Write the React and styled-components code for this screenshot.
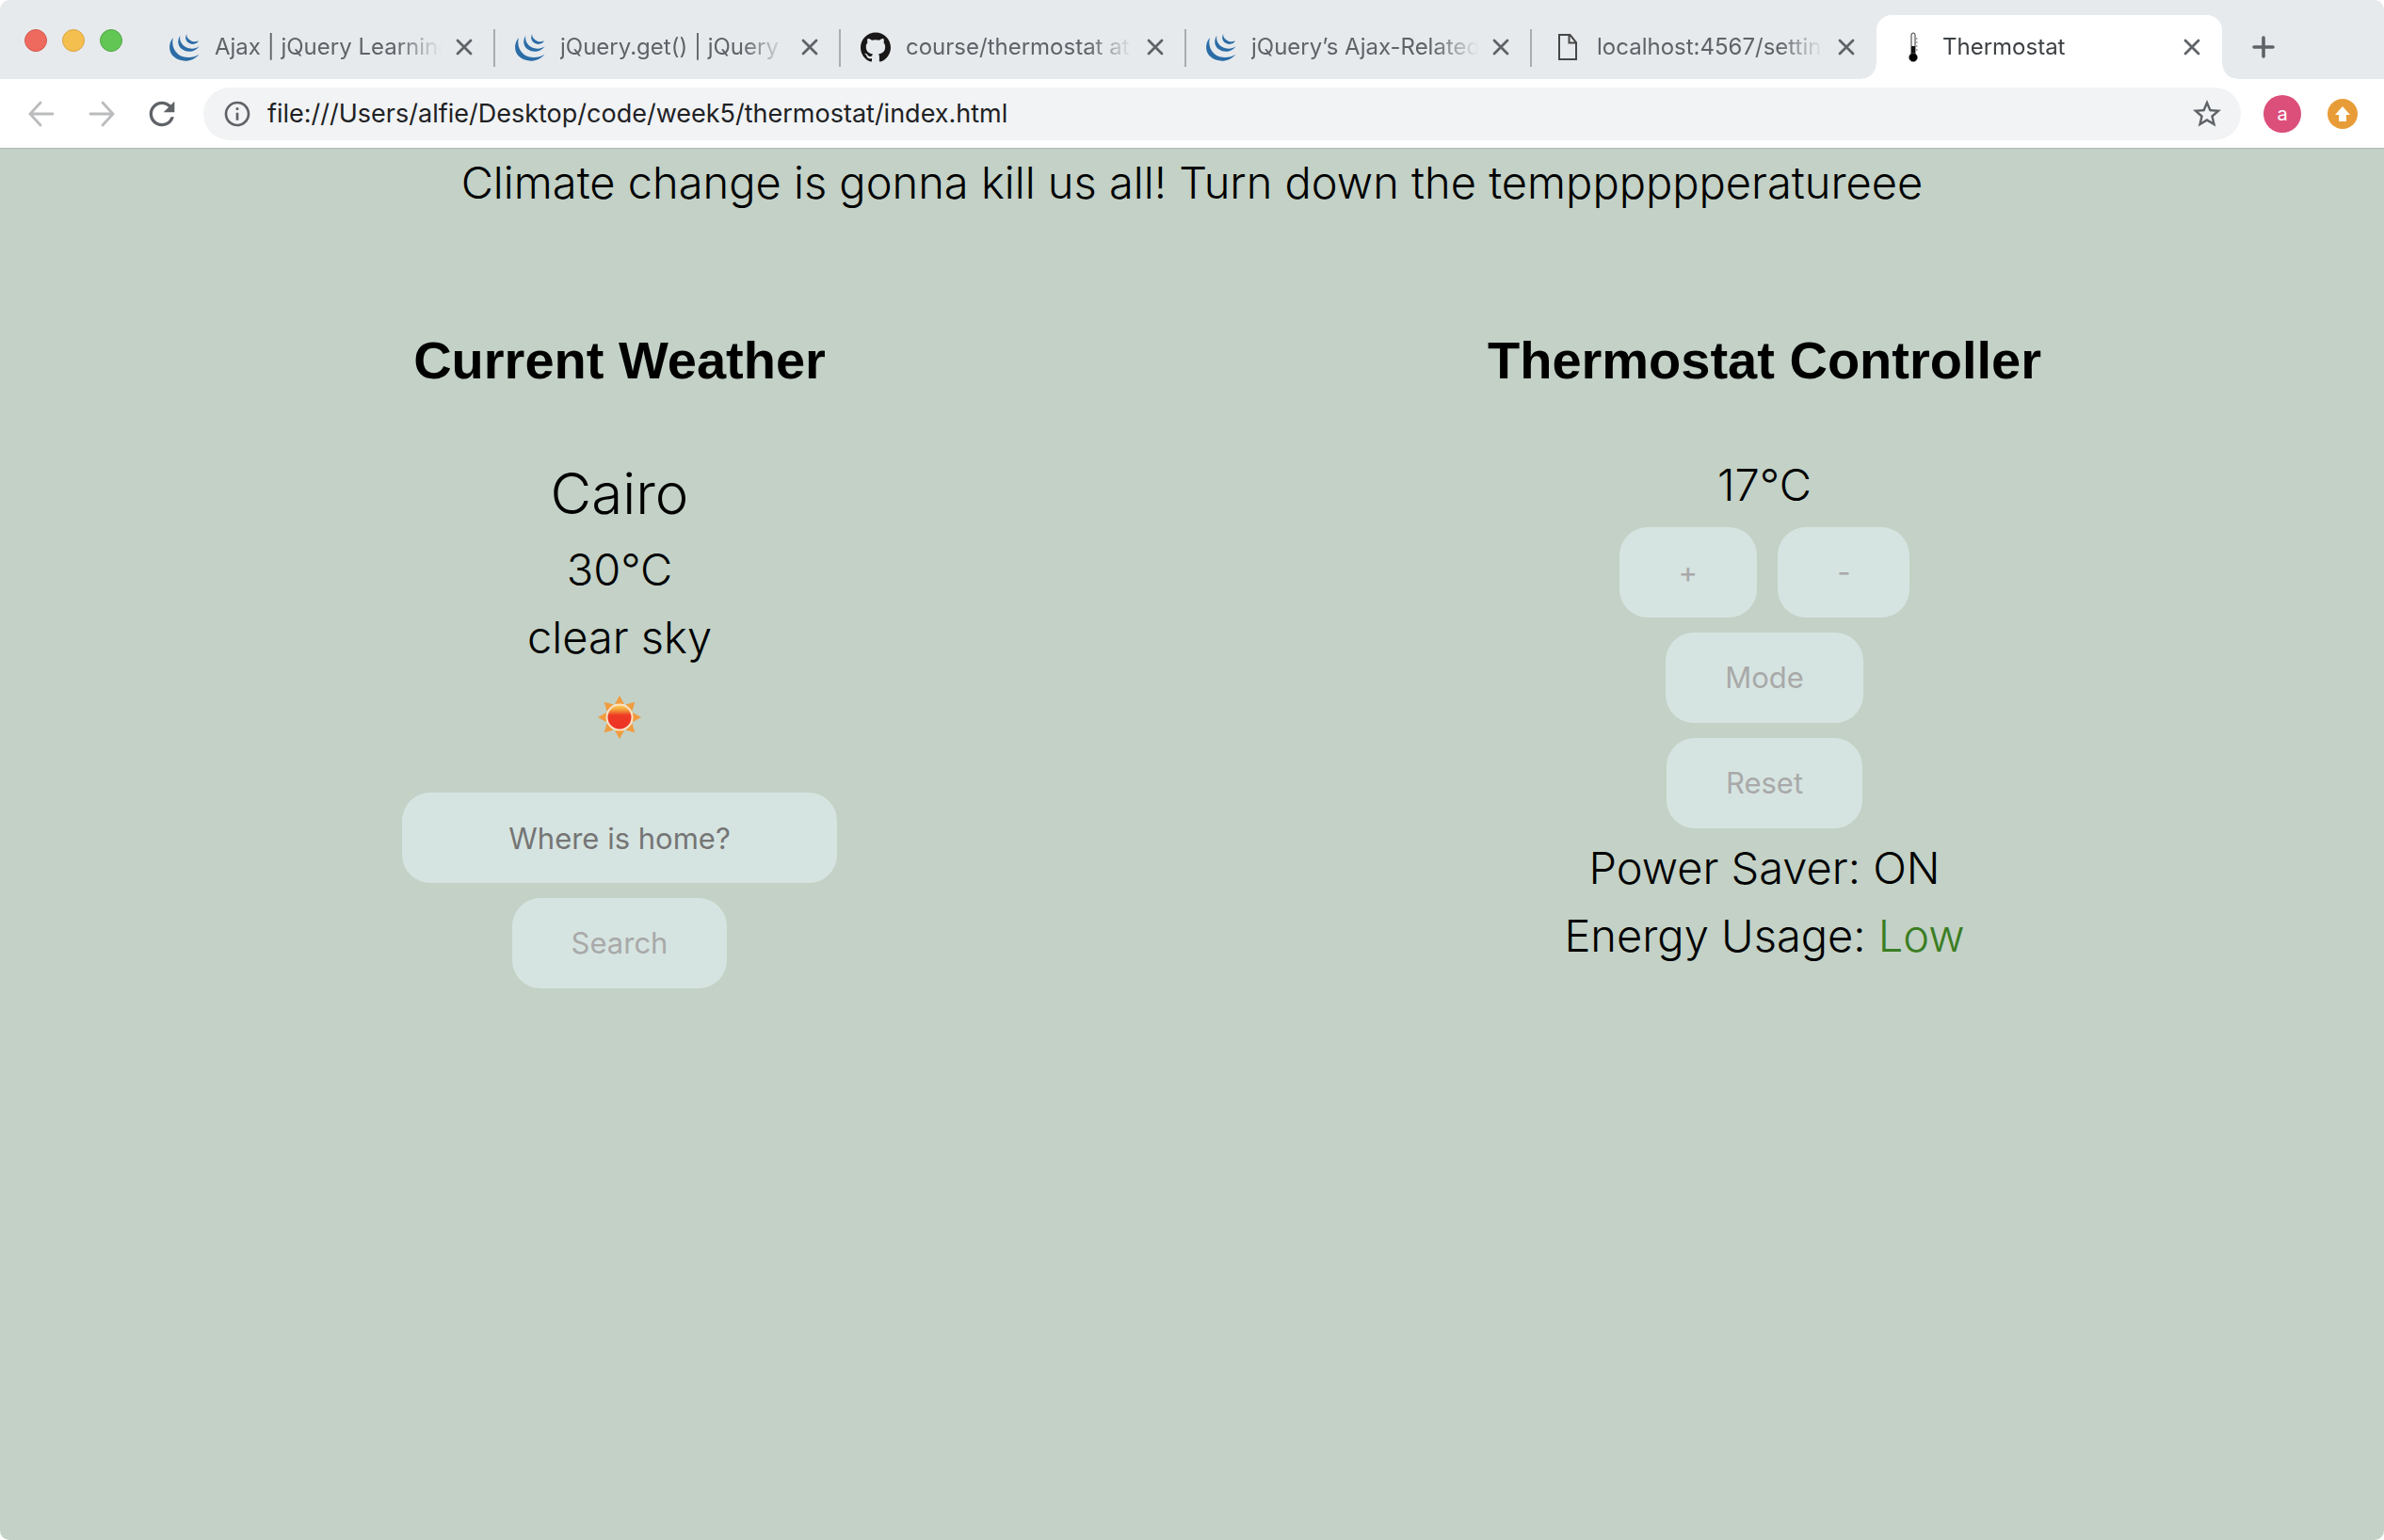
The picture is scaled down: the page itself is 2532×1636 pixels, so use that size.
import React from "react";
import styled, { createGlobalStyle, css } from "styled-components";
import { MdRefresh, MdInfoOutline, MdStarBorder } from "react-icons/md";
import { SiGithub } from "react-icons/si";

const ui = `Inter, "Noto Sans", sans-serif`;
const display = `"Liberation Sans", Arial, sans-serif`;

const colors = {
  strip: "#e6eaed",
  chromeIcon: "#5f6368",
  chromeIconOff: "#babcbe",
  page: "#c3d1c6",
  control: "#d6e4e1",
  controlText: "#a9a9a9",
  placeholder: "#757575",
  low: "#3a7d22",
};

const GlobalStyle = createGlobalStyle`
  *, *::before, *::after { box-sizing: border-box; }
  body { margin: 0; background: #fff; font-family: ${ui}; }
  h1, h2, p { margin: 0; }
  button, input { font-family: inherit; border: 0; padding: 0; background: none; outline: 0; }
  button { cursor: pointer; }
`;

const Window = styled.div`
  min-height: 100vh;
  display: flex;
  flex-direction: column;
  border-radius: 10px;
  overflow: hidden;
`;

/* Tab strip */

const TabStrip = styled.header`
  display: flex;
  align-items: flex-end;
  height: 84px;
  padding-left: 26px;
  background: ${colors.strip};
`;

const WindowButtons = styled.div`
  display: flex;
  align-items: center;
  gap: 16px;
  height: 82px;
  margin-right: 28px;
`;

const WindowButton = styled.button`
  width: 24px;
  height: 24px;
  border-radius: 50%;
  background: ${(p) => p.$fill};
  border: 1px solid ${(p) => p.$edge};
`;

const Tabs = styled.nav`
  display: flex;
  min-width: 0;
`;

const activeTab = css`
  background: #fff;
  border-radius: 16px 16px 0 0;

  &::before,
  &::after {
    content: "";
    position: absolute;
    bottom: 0;
    width: 16px;
    height: 16px;
  }
  &::before {
    left: -16px;
    background: radial-gradient(circle at 0 0, ${colors.strip} 15px, #fff 16px);
  }
  &::after {
    right: -16px;
    background: radial-gradient(circle at 100% 0, ${colors.strip} 15px, #fff 16px);
  }
`;

const dividedTab = css`
  &::after {
    content: "";
    position: absolute;
    right: -1px;
    top: 15px;
    width: 2px;
    height: 40px;
    background: #a9adb0;
  }
`;

const TabBox = styled.div`
  position: relative;
  display: flex;
  align-items: center;
  flex: 0 1 367px;
  width: 367px;
  min-width: 0;
  height: 68px;
  padding: 0 20px 0 22px;
  ${(p) => p.$active && activeTab}
  ${(p) => p.$divided && dividedTab}
`;

const TabLink = styled.a`
  display: flex;
  align-items: center;
  gap: 16px;
  flex: 1;
  min-width: 0;
  color: ${(p) => (p.$active ? "#3c4043" : colors.chromeIcon)};
  text-decoration: none;
`;

const TabTitle = styled.span`
  flex: 1;
  min-width: 0;
  overflow: hidden;
  white-space: nowrap;
  font-size: 24px;
  line-height: 32px;
  mask-image: linear-gradient(to right, #000 calc(100% - 48px), transparent);
`;

const IconButton = styled.button`
  display: grid;
  place-items: center;
  flex: none;
  width: ${(p) => p.$size || 32}px;
  height: ${(p) => p.$size || 32}px;
  color: ${(p) => (p.$off ? colors.chromeIconOff : colors.chromeIcon)};
`;

const CloseButton = styled(IconButton)`
  width: 24px;
  margin-left: 12px;
`;

const NewTabButton = styled(IconButton)`
  align-self: center;
  margin: 16px 0 0 28px;
`;

/* Toolbar */

const Toolbar = styled.div`
  display: flex;
  align-items: center;
  height: 74px;
  padding: 0 28px;
  background: #fff;
  border-bottom: 1px solid #b4b8b6;
`;

const NavButtons = styled.div`
  display: flex;
  align-items: center;
  gap: 28px;
  margin-right: 24px;
`;

const NavPair = styled.div`
  display: flex;
  gap: 32px;
`;

const AddressBar = styled.div`
  display: flex;
  align-items: center;
  gap: 16px;
  flex: 1;
  height: 56px;
  padding: 0 18px 0 20px;
  border-radius: 28px;
  background: #f1f3f4;
`;

const AddressInput = styled.input`
  flex: 1;
  min-width: 0;
  font-size: 27px;
  line-height: 36px;
  color: #202124;
`;

const Profile = styled.button`
  width: 40px;
  height: 40px;
  margin: 0 28px 0 24px;
  border-radius: 50%;
  background: #dc4f7b;
  color: #fff;
  font-size: 20px;
  line-height: 36px;
`;

const UpdateButton = styled(IconButton)`
  border-radius: 50%;
  background: #e89c37;
`;

/* Page */

const Page = styled.main`
  flex: 1;
  padding: 0 50px 64px;
  background: ${colors.page};
  color: #000;
  text-align: center;
`;

const Line = styled.p`
  font-size: 47px;
  line-height: 72px;
  font-weight: 300;
`;

const Columns = styled.div`
  display: grid;
  grid-template-columns: 1fr 1fr;
  margin-top: 111px;
`;

const Column = styled.section`
  display: flex;
  flex-direction: column;
  align-items: center;
`;

const Heading = styled.h1`
  margin-bottom: 54px;
  font-family: ${display};
  font-size: 56px;
  line-height: 84px;
  font-weight: 700;
`;

const City = styled.h2`
  font-size: 60px;
  line-height: 90px;
  font-weight: 300;
`;

const WeatherIcon = styled.div`
  display: grid;
  place-items: center;
  height: 98px;
`;

const SearchForm = styled.form`
  display: flex;
  flex-direction: column;
  align-items: center;
  gap: 16px;
  margin-top: 31px;
`;

const control = css`
  height: 96px;
  border-radius: 30px;
  background: ${colors.control};
  font-size: 31px;
  line-height: 36px;
`;

const CityInput = styled.input`
  ${control}
  width: 462px;
  text-align: center;
  &::placeholder {
    color: ${colors.placeholder};
    opacity: 1;
  }
`;

const Button = styled.button`
  ${control}
  padding: 0 63px;
  color: ${colors.controlText};
`;

const Controls = styled.div`
  display: flex;
  flex-direction: column;
  align-items: center;
  gap: 16px;
  padding: 9px 0 6px;
`;

const ButtonRow = styled.div`
  display: flex;
  gap: 22px;
`;

const Usage = styled.span`
  color: ${colors.low};
`;

/* Drawings */

const JQueryLogo = () => (
  <svg width="32" height="32" viewBox="24 24 96 96" fill="#2b6ca6">
    <path d="M36 42C20 60 20 88 38 103C60 122 98 121 118 95C98 108 70 108 52 95C36 82 30 62 36 42Z" />
    <path d="M58 35C48 50 50 68 64 79C82 92 107 88 119 69C106 79 90 79 76 72C62 64 55 50 58 35Z" />
    <path d="M79 30C72 42 76 54 88 60C99 66 112 62 117 52C108 56 98 56 90 50C81 44 77 38 79 30Z" />
  </svg>
);

const PageLogo = () => (
  <svg width="32" height="32" viewBox="0 0 32 32" fill="none" stroke="#474747" strokeWidth="2">
    <path d="M8 3H19.500L26 11V29H8ZM18.500 3V11.500H26" />
  </svg>
);

const ThermometerLogo = () => (
  <svg width="32" height="32" viewBox="0 0 32 32">
    <rect x="15" y="1" width="4" height="25" rx="2" fill="#fff" stroke="#333" />
    <rect x="15" y="15" width="4" height="13" fill="#111" />
    <circle cx="17" cy="27" r="4.500" fill="#000" stroke="#777" strokeWidth="0.500" />
    <path d="M20 7h1.500M20 11h1.500M20 15h1.500M20 19h1.500" stroke="#555" />
  </svg>
);

const CloseIcon = () => (
  <svg width="18" height="18" viewBox="0 0 18 18" stroke="currentColor" strokeWidth="2.800" strokeLinecap="round">
    <path d="M2 2L16 16M16 2L2 16" />
  </svg>
);

const PlusIcon = () => (
  <svg width="24" height="24" viewBox="0 0 24 24" stroke="currentColor" strokeWidth="3.600" strokeLinecap="round">
    <path d="M12 2V22M2 12H22" />
  </svg>
);

const ArrowIcon = ({ d }) => (
  <svg width="28" height="28" viewBox="0 0 28 28" fill="none" stroke="currentColor" strokeWidth="2.800" strokeLinecap="round">
    <path d={d} />
  </svg>
);

const UpIcon = () => (
  <svg width="18" height="18" viewBox="0 0 18 18" fill="#fff">
    <path d="M9 1L17 10H13V17H5V10H1Z" />
  </svg>
);

const rays = [0, 45, 90, 135, 180, 225, 270, 315];

const Sun = () => (
  <svg width="48" height="48" viewBox="0 0 48 48" role="img" aria-label="Sunny">
    <defs>
      <linearGradient id="sun" x1="0" y1="0" x2="0" y2="1">
        <stop offset="0" stopColor="#fbd95f" />
        <stop offset="0.200" stopColor="#f4a03c" />
        <stop offset="0.420" stopColor="#ee3a24" />
        <stop offset="1" stopColor="#ec3125" />
      </linearGradient>
    </defs>
    {rays.map((a) => (
      <path key={a} d="M24 1L29 10H19Z" fill="#f19c3f" transform={`rotate(${a} 24 24)`} />
    ))}
    <circle cx="24" cy="24" r="13.500" fill="url(#sun)" stroke="#fbe3c4" strokeWidth="2" />
  </svg>
);

const tabs = [
  { title: "Ajax | jQuery Learning Center", icon: <JQueryLogo /> },
  { title: "jQuery.get() | jQuery API", icon: <JQueryLogo /> },
  { title: "course/thermostat at master", icon: <SiGithub size={32} color="#191717" /> },
  { title: "jQuery’s Ajax-Related Methods", icon: <JQueryLogo /> },
  { title: "localhost:4567/settings", icon: <PageLogo /> },
  { title: "Thermostat", icon: <ThermometerLogo /> },
];

const warning = `Climate change is gonna kill us all! Turn down the tem${"p".repeat(6)}eratureee`;

const Tab = ({ title, icon, active, divided }) => (
  <TabBox $active={active} $divided={divided}>
    <TabLink href="#" $active={active} aria-current={active ? "page" : undefined}>
      {icon}
      <TabTitle>{title}</TabTitle>
    </TabLink>
    <CloseButton aria-label={`Close ${title}`}>
      <CloseIcon />
    </CloseButton>
  </TabBox>
);

export default function App() {
  const last = tabs.length - 1;
  return (
    <>
      <GlobalStyle />
      <Window>
        <TabStrip>
          <WindowButtons>
            <WindowButton $fill="#ee6a5f" $edge="#d5594f" aria-label="Close window" />
            <WindowButton $fill="#f5bf50" $edge="#d9a443" aria-label="Minimise window" />
            <WindowButton $fill="#62c655" $edge="#52a845" aria-label="Zoom window" />
          </WindowButtons>
          <Tabs aria-label="Tabs">
            {tabs.map((t, i) => (
              <Tab key={i} {...t} active={i === last} divided={i < last - 1} />
            ))}
          </Tabs>
          <NewTabButton aria-label="New tab">
            <PlusIcon />
          </NewTabButton>
        </TabStrip>

        <Toolbar>
          <NavButtons>
            <NavPair>
              <IconButton $off aria-label="Back">
                <ArrowIcon d="M26 14H2.500M13 2L2 14L13 26" />
              </IconButton>
              <IconButton $off aria-label="Forward">
                <ArrowIcon d="M2 14H25.500M15 2L26 14L15 26" />
              </IconButton>
            </NavPair>
            <IconButton $size={40} aria-label="Reload">
              <MdRefresh size={40} />
            </IconButton>
          </NavButtons>
          <AddressBar>
            <IconButton aria-label="Site information">
              <MdInfoOutline size={32} />
            </IconButton>
            <AddressInput
              aria-label="Address"
              defaultValue="file:///Users/alfie/Desktop/code/week5/thermostat/index.html"
            />
            <IconButton $size={36} aria-label="Bookmark this page">
              <MdStarBorder size={36} />
            </IconButton>
          </AddressBar>
          <Profile aria-label="Profile a">a</Profile>
          <UpdateButton aria-label="Update">
            <UpIcon />
          </UpdateButton>
        </Toolbar>

        <Page>
          <Line>{warning}</Line>
          <Columns>
            <Column>
              <Heading>Current Weather</Heading>
              <City>Cairo</City>
              <Line>30°C</Line>
              <Line>clear sky</Line>
              <WeatherIcon>
                <Sun />
              </WeatherIcon>
              <SearchForm onSubmit={(e) => e.preventDefault()}>
                <CityInput aria-label="Where is home?" placeholder="Where is home?" />
                <Button type="submit">Search</Button>
              </SearchForm>
            </Column>
            <Column>
              <Heading>Thermostat Controller</Heading>
              <Line>17°C</Line>
              <Controls>
                <ButtonRow>
                  <Button>+</Button>
                  <Button>-</Button>
                </ButtonRow>
                <Button>Mode</Button>
                <Button>Reset</Button>
              </Controls>
              <Line>Power Saver: ON</Line>
              <Line>
                Energy Usage: <Usage>Low</Usage>
              </Line>
            </Column>
          </Columns>
        </Page>
      </Window>
    </>
  );
}
